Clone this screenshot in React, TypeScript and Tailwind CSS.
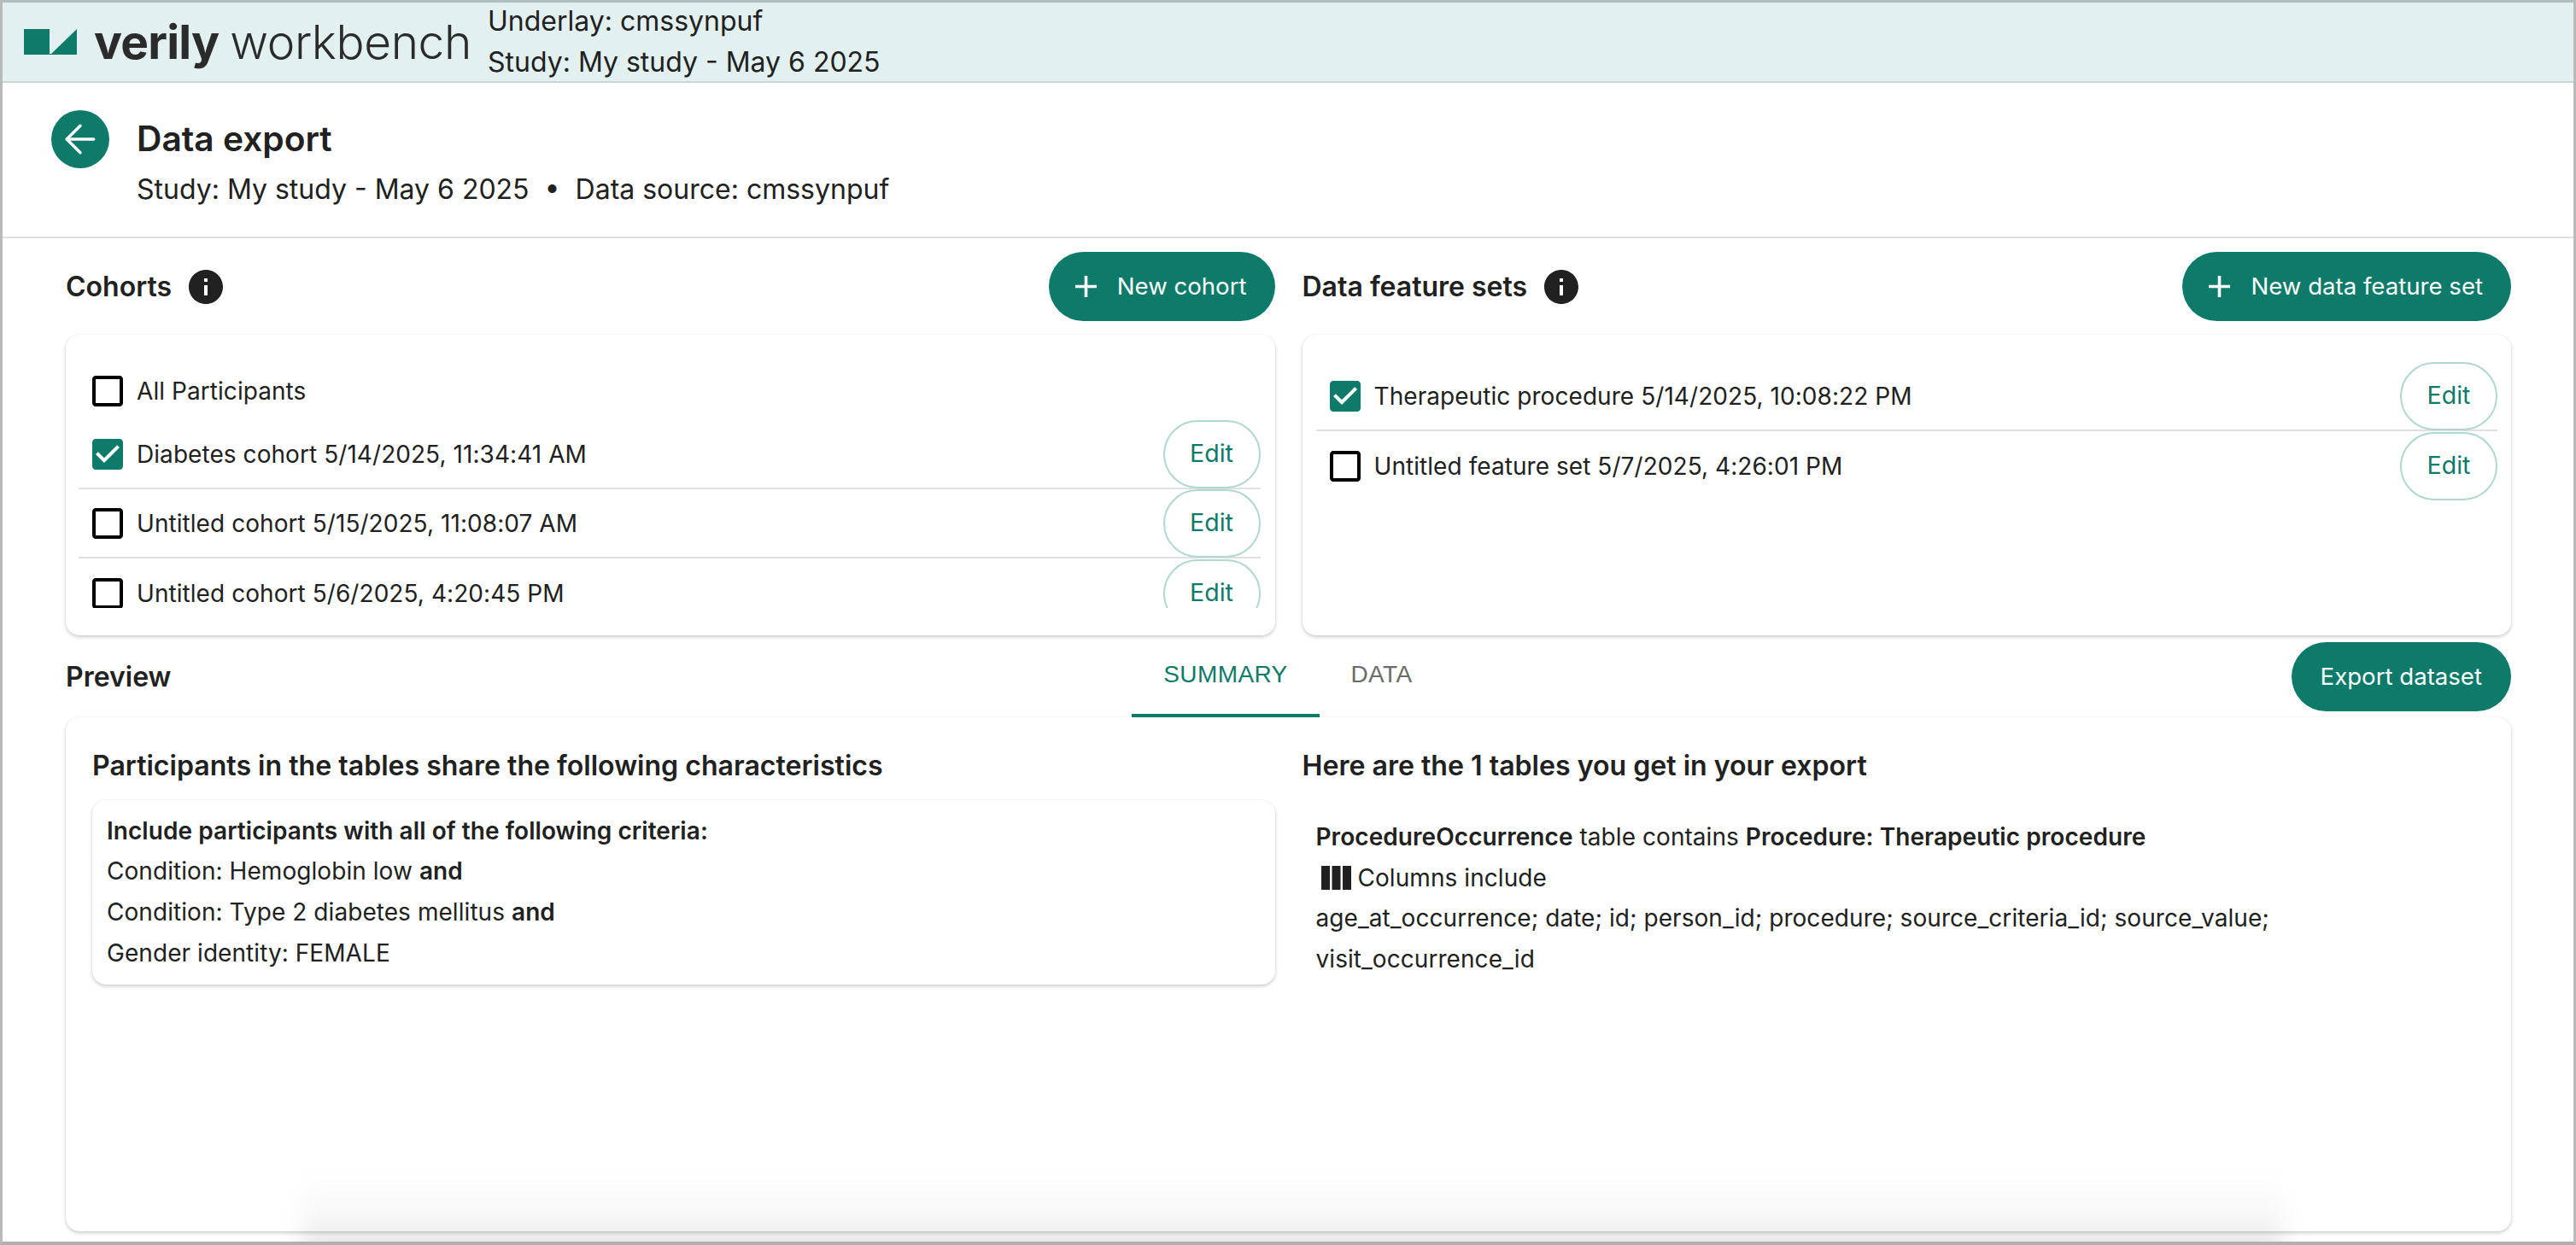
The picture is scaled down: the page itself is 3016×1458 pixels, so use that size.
import { ArrowLeft } from 'lucide-react'

const TEAL = 'M19 3H5c-1.11 0-2 .9-2 2v14c0 1.1.89 2 2 2h14c1.11 0 2-.9 2-2V5c0-1.1-.89-2-2-2zm-9 14l-5-5 1.41-1.41L10 14.17l7.59-7.59L19 8l-9 9z'
const OUTLINE = 'M19 5v14H5V5h14m0-2H5c-1.1 0-2 .9-2 2v14c0 1.1.9 2 2 2h14c1.1 0 2-.9 2-2V5c0-1.1-.9-2-2-2z'

function Check({ checked }: { checked?: boolean }) {
  return (
    <svg viewBox="0 0 24 24" className={checked ? 'h-12 w-12 shrink-0 fill-[#0d7a6a]' : 'h-12 w-12 shrink-0 fill-black'}>
      <path d={checked ? TEAL : OUTLINE} />
    </svg>
  )
}

function Info() {
  return (
    <svg viewBox="0 0 24 24" className="h-12 w-12 shrink-0 fill-[#212121]">
      <path d="M12 2C6.48 2 2 6.48 2 12s4.48 10 10 10 10-4.48 10-10S17.52 2 12 2zm1 15h-2v-6h2v6zm0-8h-2V7h2v2z" />
    </svg>
  )
}

function Plus() {
  return (
    <svg viewBox="0 0 24 24" className="h-[43px] w-[43px] shrink-0 fill-white">
      <path d="M19 13h-6v6h-2v-6H5v-2h6V5h2v6h6v2z" />
    </svg>
  )
}

function EditButton() {
  return (
    <button className="flex h-[80px] w-[114px] shrink-0 items-center justify-center rounded-[40px] border-2 border-[#b2d6d0] text-[28.5px] text-[#0d7a6a]">
      Edit
    </button>
  )
}

function Row({ label, checked, divider }: { label: string; checked?: boolean; divider?: boolean }) {
  return (
    <div className={divider ? 'flex h-[81px] items-center border-b-2 border-[#e0e0e0]' : 'flex h-[81px] items-center'}>
      <div className="flex flex-1 items-center gap-[10px] pl-[10px]">
        <Check checked={checked} />
        <span className="text-[28px] tracking-[0.06px] text-[#212121]">{label}</span>
      </div>
      <EditButton />
    </div>
  )
}

function SectionHead({ title, action }: { title: string; action: string }) {
  return (
    <div className="flex h-[81px] items-center justify-between">
      <div className="flex items-center gap-[16px]">
        <h2 className="text-[32px] font-semibold text-[#212121]">{title}</h2>
        <Info />
      </div>
      <button className="flex h-[81px] items-center gap-[15px] rounded-[41px] bg-[#0d7a6a] pl-[22px] pr-[33px] text-[27.6px] text-white">
        <Plus />
        {action}
      </button>
    </div>
  )
}

const cardCls = 'rounded-[16px] bg-white shadow-[0_2px_4px_rgba(0,0,0,0.2),0_0_2px_rgba(0,0,0,0.06)]'

export default function App() {
  return (
    <div
      className="relative flex h-[1458px] w-[3016px] flex-col overflow-hidden border-x-[3px] border-t-[3px] border-b-[4px] border-x-[#b9b9b9] border-t-[#b0bec0] border-b-[#b0b0b0] bg-white text-[#212121]"
      style={{ fontFamily: 'Inter, sans-serif' }}
    >
      <header className="flex h-[94px] shrink-0 items-center border-b-2 border-[#c8d6d6] bg-[#e2f0f0] pl-[25px]">
        <svg viewBox="0 0 62 30" className="h-[30px] w-[62px] shrink-0 fill-[#0d7a6a]">
          <path d="M0 0H30V29H32L62 0V30H0Z" />
        </svg>
        <div className="ml-[20px] flex w-[450px] items-baseline text-[55px] leading-none text-[#2b2b2b]">
          <span className="font-bold tracking-[-0.8px]">verily</span>
          <span className="ml-[13px] font-light tracking-[-0.4px]">workbench</span>
        </div>
        <div className="ml-[11px] text-[32px] leading-[48px]">
          <div>Underlay: cmssynpuf</div>
          <div>Study: My study - May 6 2025</div>
        </div>
      </header>

      <section className="flex h-[182px] shrink-0 items-start border-b-2 border-[#e0e0e0] pl-[57px] pt-[32px]">
        <button className="flex h-[68px] w-[68px] shrink-0 items-center justify-center rounded-full bg-[#0d7a6a] text-white">
          <ArrowLeft size={54} strokeWidth={1.5} />
        </button>
        <div className="ml-[32px]">
          <h1 className="text-[40.7px] font-semibold leading-[68px]">Data export</h1>
          <p className="mt-[1px] text-[32px] leading-[48px]">Study: My study - May 6 2025 &nbsp;•&nbsp; Data source: cmssynpuf</p>
        </div>
      </section>

      <main className="flex flex-1 flex-col pl-[74px] pr-[73px] pt-[16px]">
        <div className="grid grid-cols-2 gap-x-[32px]">
          <div>
            <SectionHead title="Cohorts" action="New cohort" />
            <div className={`mt-[16px] h-[352px] pl-[15px] pr-[17px] pt-[32px] ${cardCls}`}>
              <div className="h-[288px] overflow-hidden">
                <div className="flex h-[68px] items-center gap-[10px] pl-[10px]">
                  <Check />
                  <span className="text-[28px] tracking-[0.06px]">All Participants</span>
                </div>
                <Row label="Diabetes cohort 5/14/2025, 11:34:41 AM" checked divider />
                <Row label="Untitled cohort 5/15/2025, 11:08:07 AM" divider />
                <Row label="Untitled cohort 5/6/2025, 4:20:45 PM" />
              </div>
            </div>
          </div>
          <div>
            <SectionHead title="Data feature sets" action="New data feature set" />
            <div className={`mt-[16px] h-[352px] px-[16px] pt-[32px] ${cardCls}`}>
              <Row label="Therapeutic procedure 5/14/2025, 10:08:22 PM" checked divider />
              <Row label="Untitled feature set 5/7/2025, 4:26:01 PM" />
            </div>
          </div>
        </div>

        <div className="mt-[8px] flex h-[81px] items-center">
          <h2 className="w-[1248px] shrink-0 text-[32px] font-semibold">Preview</h2>
          <div
            className="relative z-10 flex h-full self-stretch text-[28px] tracking-[0.4px]"
            style={{ fontFamily: '"Liberation Sans", sans-serif' }}
          >
            <div className="flex h-[88px] w-[220px] items-center justify-center border-b-4 border-[#0d7a6a] pb-[8px] text-[#0d7a6a]">SUMMARY</div>
            <div className="flex h-[88px] w-[145px] items-center justify-center pb-[12px] text-[#6b6b6b]">DATA</div>
          </div>
          <button className="ml-auto h-[81px] rounded-[41px] bg-[#0d7a6a] px-[34px] text-[27.6px] text-white">Export dataset</button>
        </div>

        <div className={`mt-[7px] grid h-[602px] grid-cols-2 gap-x-[32px] px-[31px] pt-[38px] ${cardCls}`}>
          <div>
            <h3 className="text-[32.1px] font-semibold leading-[38px]">Participants in the tables share the following characteristics</h3>
            <div className={`mt-[21px] h-[216px] rounded-[14px] px-[17px] pt-[14px] text-[28px] leading-[48px] tracking-[0.06px] ${cardCls}`}>
              <div className="h-[45px] font-semibold leading-[45px]">Include participants with all of the following criteria:</div>
              <div>Condition: Hemoglobin low <b className="font-semibold">and</b></div>
              <div>Condition: Type 2 diabetes mellitus <b className="font-semibold">and</b></div>
              <div>Gender identity: FEMALE</div>
            </div>
          </div>
          <div>
            <h3 className="text-[32.1px] font-semibold leading-[38px]">Here are the 1 tables you get in your export</h3>
            <div className="mt-[21px] px-[16px] pt-[19px] text-[28px] leading-[48px] tracking-[0.06px]">
              <div><b className="font-semibold">ProcedureOccurrence</b> table contains <b className="font-semibold">Procedure: Therapeutic procedure</b></div>
              <div className="flex h-[47px] items-center gap-[8px] pl-[6px]">
                <svg viewBox="0 0 35 28" className="h-[28px] w-[35px] shrink-0 fill-[#212121]">
                  <path d="M0 0H10V28H0ZM12.500 0H22.500V28H12.500ZM25 0H35V28H25Z" />
                </svg>
                Columns include
              </div>
              <div>age_at_occurrence; date; id; person_id; procedure; source_criteria_id; source_value; visit_occurrence_id</div>
            </div>
          </div>
        </div>
      </main>

      <div className="pointer-events-none absolute bottom-[-20px] left-[350px] z-20 h-[100px] w-[2320px] bg-linear-to-t from-black/16 via-black/4 via-35% to-transparent blur-[14px]" />
    </div>
  )
}
